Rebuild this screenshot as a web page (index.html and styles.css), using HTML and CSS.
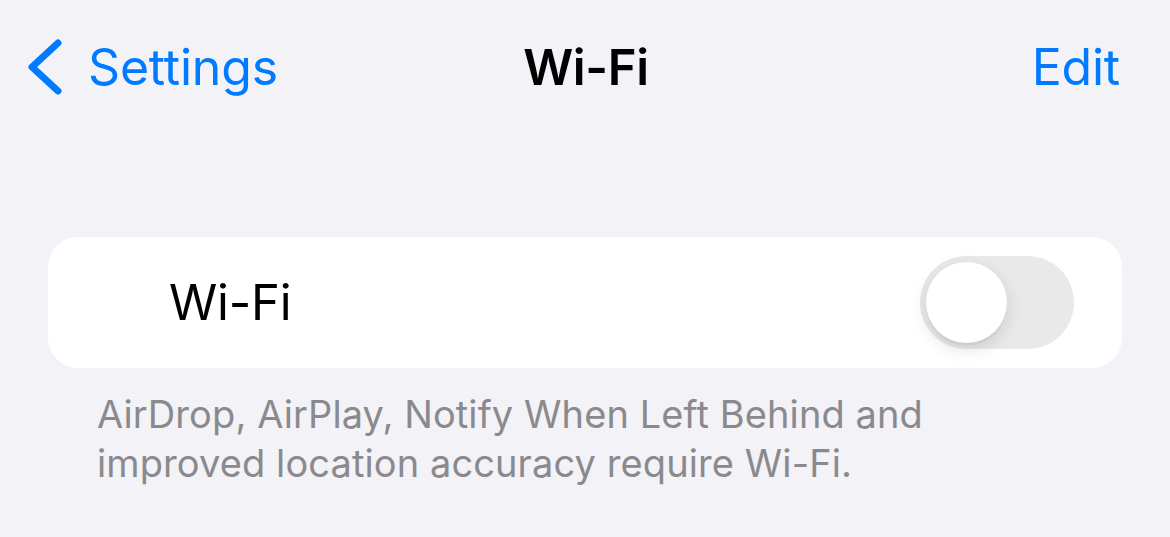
FILE: index.html
```html
<!DOCTYPE html>
<html>
<head>
<meta charset="utf-8">
<link rel="stylesheet" href="styles.css">
</head>
<body>
<div class="screen">
  <header class="nav">
    <div class="nav-left">
      <svg class="chev" width="40" height="56" viewBox="0 0 40 56"><path d="M32 4 L6 28 L32 52" fill="none" stroke="#007aff" stroke-width="7" stroke-linecap="round" stroke-linejoin="round"/></svg>
      <span class="back">Settings</span>
    </div>
    <div class="title">Wi-Fi</div>
    <div class="nav-right"><span class="edit">Edit</span></div>
  </header>
  <section class="card">
    <span class="label">Wi-Fi</span>
    <div class="toggle"><div class="knob"></div></div>
  </section>
  <p class="footer">AirDrop, AirPlay, Notify When Left Behind and<br>improved location accuracy require Wi-Fi.</p>
</div>
</body>
</html>
```
FILE: styles.css
```css
html, body {
  margin: 0;
  padding: 0;
  background: #f2f2f7;
  font-family: Inter, "Noto Sans", "Liberation Sans", sans-serif;
}
.screen {
  width: 1170px;
  height: 537px;
  overflow: hidden;
}
.nav {
  display: grid;
  grid-template-columns: 1fr auto 1fr;
  align-items: center;
  height: 134px;
  padding: 0 26px 0 28px;
  box-sizing: border-box;
}
.nav-left {
  display: flex;
  align-items: center;
  gap: 22px;
  margin-left: -2px;
}
.chev { display: block; }
.back, .edit {
  color: #007aff;
  font-size: 50px;
  letter-spacing: -0.2px;
}
.title {
  font-size: 49px;
  font-weight: 600;
  color: #000;
  letter-spacing: -0.3px;
}
.nav-right {
  display: flex;
  justify-content: flex-end;
  padding-right: 24px;
}
.card {
  margin: 103px 48px 0;
  height: 131px;
  background: #fff;
  border-radius: 30px;
  display: flex;
  align-items: center;
  justify-content: space-between;
  padding: 0 48px 0 121px;
}
.label {
  font-size: 49px;
  color: #000;
  letter-spacing: -0.2px;
}
.toggle {
  width: 154px;
  height: 93px;
  border-radius: 47px;
  background: #e9e9ea;
  display: flex;
  align-items: center;
  padding-left: 6px;
  box-sizing: border-box;
}
.knob {
  width: 81px;
  height: 81px;
  border-radius: 50%;
  background: #fff;
  box-shadow: 0 6px 18px rgba(0,0,0,0.12), 0 3px 1px rgba(0,0,0,0.04);
}
.footer {
  margin: 22px 0 0 97px;
  font-size: 38px;
  line-height: 49px;
  color: #8a8a8e;
  letter-spacing: 0.1px;
}
```
